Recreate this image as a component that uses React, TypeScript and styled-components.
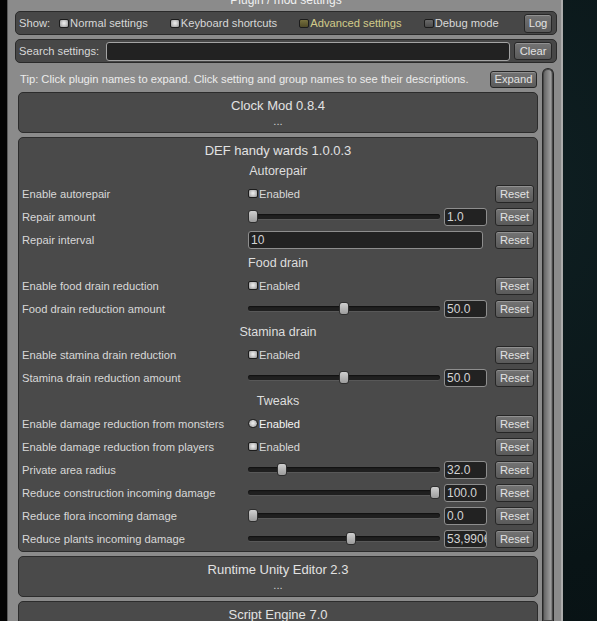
import React from 'react';
import styled, { createGlobalStyle, css } from 'styled-components';

type Tone = 'on' | 'off' | 'adv' | 'hover';

type Setting =
  | { kind: 'toggle'; label: string; hover?: boolean }
  | { kind: 'slider'; label: string; value: string; fraction: number }
  | { kind: 'text'; label: string; value: string };

interface Group {
  name: string;
  settings: Setting[];
}

interface Plugin {
  title: string;
  groups?: Group[];
}

const plugins: Plugin[] = [
  { title: 'Clock Mod 0.8.4' },
  {
    title: 'DEF handy wards 1.0.0.3',
    groups: [
      {
        name: 'Autorepair',
        settings: [
          { kind: 'toggle', label: 'Enable autorepair' },
          { kind: 'slider', label: 'Repair amount', value: '1.0', fraction: 0 },
          { kind: 'text', label: 'Repair interval', value: '10' }
        ]
      },
      {
        name: 'Food drain',
        settings: [
          { kind: 'toggle', label: 'Enable food drain reduction' },
          { kind: 'slider', label: 'Food drain reduction amount', value: '50.0', fraction: 0.5 }
        ]
      },
      {
        name: 'Stamina drain',
        settings: [
          { kind: 'toggle', label: 'Enable stamina drain reduction' },
          { kind: 'slider', label: 'Stamina drain reduction amount', value: '50.0', fraction: 0.5 }
        ]
      },
      {
        name: 'Tweaks',
        settings: [
          { kind: 'toggle', label: 'Enable damage reduction from monsters', hover: true },
          { kind: 'toggle', label: 'Enable damage reduction from players' },
          { kind: 'slider', label: 'Private area radius', value: '32.0', fraction: 0.16 },
          { kind: 'slider', label: 'Reduce construction incoming damage', value: '100.0', fraction: 1 },
          { kind: 'slider', label: 'Reduce flora incoming damage', value: '0.0', fraction: 0 },
          { kind: 'slider', label: 'Reduce plants incoming damage', value: '53,9906', fraction: 0.54 }
        ]
      }
    ]
  },
  { title: 'Runtime Unity Editor 2.3' },
  { title: 'Script Engine 7.0' }
];

const GlobalStyle = createGlobalStyle`
  html, body {
    margin: 0;
    padding: 0;
    background: #0a1618;
  }

  body {
    font-family: "Liberation Sans", Arial, sans-serif;
    font-size: 11.2px;
    color: #d8d8d8;
  }
`;

const Page = styled.div`
  width: 597px;
  height: 621px;
  overflow: hidden;
  display: flex;
  background: radial-gradient(circle at 80% 30%, #0f2023 0%, #091416 60%, #071012 100%);
`;

const LeftEdge = styled.div`
  width: 7px;
  flex: none;
  background: #050505;
`;

const Window = styled.div`
  width: 556px;
  flex: none;
  box-sizing: border-box;
  background: #8b8b8b;
  border-left: 1px solid #5c5c5c;
  border-right: 2px solid #acacac;
  padding: 0 4px 0 7px;
  display: flex;
  flex-direction: column;
`;

const TitleBar = styled.div`
  height: 11px;
  overflow: hidden;
  text-align: center;
`;

const TitleText = styled.div`
  margin-top: -7px;
  line-height: 14px;
  font-size: 12px;
  color: #f0f0f0;
`;

const Bar = styled.div`
  height: 24px;
  box-sizing: border-box;
  margin-bottom: 4px;
  display: flex;
  align-items: center;
  background: #474747;
  border: 1px solid #2a2a2a;
  border-radius: 5px;
  padding: 0 4px 0 3px;
  color: #d8d8d8;
`;

const ShowLabel = styled.span`
  margin-right: 9px;
`;

const ToggleWrap = styled.span<{ $tone: Tone }>`
  display: inline-flex;
  align-items: center;
  white-space: nowrap;
  margin-right: 22px;
  color: ${p => (p.$tone === 'adv' ? '#d2cb8a' : p.$tone === 'hover' ? '#f4f4f4' : '#d8d8d8')};
`;

const Box = styled.span<{ $tone: Tone }>`
  width: 8px;
  height: 7px;
  margin-right: 1px;
  border: 1px solid #1c1c1c;
  border-radius: ${p => (p.$tone === 'hover' ? '5px' : '2px')};
  ${p =>
    p.$tone === 'off'
      ? css`background: linear-gradient(#6a6a6a, #4a4a4a);`
      : p.$tone === 'adv'
        ? css`background: linear-gradient(#77703e, #4f4a27);`
        : css`background: radial-gradient(circle at 50% 45%, #f0f0f0 0%, #cacaca 45%, #8a8a8a 100%);`}
`;

const Button = styled.button<{ $w: number; $h?: number }>`
  width: ${p => p.$w}px;
  height: ${p => p.$h ?? 18}px;
  flex: none;
  padding: 0;
  font: 11.2px "Liberation Sans", Arial, sans-serif;
  color: #e2e2e2;
  background: linear-gradient(#747474, #5a5a5a);
  border: 1px solid #262626;
  border-radius: 3px;
  box-shadow: inset 0 1px 0 rgba(255, 255, 255, 0.22);
`;

const Spacer = styled.span`
  flex: 1;
`;

const SearchInput = styled.div`
  flex: 1;
  height: 19px;
  box-sizing: border-box;
  margin: 0 4px 0 7px;
  background: #222;
  border: 1px solid #a4a4a4;
  border-radius: 3px;
`;

const ScrollArea = styled.div`
  flex: 1;
  display: flex;
  min-height: 0;
`;

const Content = styled.div`
  width: 520px;
  margin-left: 3px;
  flex: none;
`;

const ScrollBar = styled.div`
  width: 12px;
  margin: 1px 0 0 4px;
  box-sizing: border-box;
  border: 1px solid #262626;
  border-bottom: none;
  border-radius: 6px 6px 0 0;
  background: linear-gradient(to right, #5e5e5e, #8a8a8a 55%, #9a9a9a 75%, #575757);
  box-shadow: inset 0 0 0 1px #474747;
`;

const TipRow = styled.div`
  height: 24px;
  margin-bottom: 1px;
  display: flex;
  align-items: center;
  justify-content: space-between;
  padding: 0 1px 0 2px;
  color: #ececec;
`;

const PluginBox = styled.div`
  margin-bottom: 4px;
  background: #4a4a4a;
  border: 1px solid #2c2c2c;
  border-radius: 5px;
  padding: 4px 0 1px;
`;

const PluginTitle = styled.div`
  text-align: center;
  font-size: 13px;
  line-height: 18px;
  color: #e2e2e2;
`;

const Dots = styled.div`
  text-align: center;
  line-height: 13px;
  height: 16px;
  color: #d0d0d0;
`;

const GroupHeader = styled.div`
  height: 22px;
  line-height: 22px;
  text-align: center;
  font-size: 12.5px;
  color: #dedede;

  & + * {
    margin-top: 0;
  }
`;

const GroupBlock = styled.div`
  & + & {
    margin-top: 1px;
  }
`;

const Row = styled.div`
  height: 23px;
  display: flex;
  align-items: center;
  padding: 0 3px;
`;

const Label = styled.div`
  width: 226px;
  flex: none;
  white-space: nowrap;
  color: #d8d8d8;
`;

const Control = styled.div`
  flex: 1;
  display: flex;
  align-items: center;
  margin-right: 8px;
`;

const Track = styled.div`
  position: relative;
  flex: 1;
  height: 5px;
  margin-right: 4px;
  background: #1f1f1f;
  border-radius: 3px;
  box-shadow: inset 0 1px 1px #111, 0 1px 0 rgba(255, 255, 255, 0.08);
`;

const Thumb = styled.div`
  position: absolute;
  top: -4px;
  width: 8px;
  height: 11px;
  background: linear-gradient(#cfcfcf, #9c9c9c);
  border: 1px solid #2e2e2e;
  border-radius: 3px;
`;

const Field = styled.div<{ $w?: number }>`
  ${p => (p.$w ? css`width: ${p.$w}px; flex: none;` : css`flex: 1; margin-right: 4px;`)}
  height: 18px;
  box-sizing: border-box;
  line-height: 16px;
  padding-left: 2px;
  overflow: hidden;
  white-space: nowrap;
  background: #222;
  border: 1px solid #8e8e8e;
  border-radius: 3px;
  color: #d4d4d4;
  font-size: 12px;
`;

const Toggle = ({ tone, children }: { tone: Tone; children: React.ReactNode }) => (
  <ToggleWrap $tone={tone}>
    <Box $tone={tone} />
    {children}
  </ToggleWrap>
);

const SettingRow = ({ setting }: { setting: Setting }) => (
  <Row>
    <Label>{setting.label}</Label>
    <Control>
      {setting.kind === 'toggle' && <Toggle tone={setting.hover ? 'hover' : 'on'}>Enabled</Toggle>}
      {setting.kind === 'slider' && (
        <>
          <Track>
            <Thumb style={{ left: `calc(${setting.fraction} * (100% - 10px))` }} />
          </Track>
          <Field $w={43}>{setting.value}</Field>
        </>
      )}
      {setting.kind === 'text' && <Field>{setting.value}</Field>}
    </Control>
    <Button $w={39}>Reset</Button>
  </Row>
);

const PluginPanel = ({ plugin }: { plugin: Plugin }) => (
  <PluginBox>
    <PluginTitle>{plugin.title}</PluginTitle>
    {plugin.groups ? (
      plugin.groups.map(group => (
        <GroupBlock key={group.name}>
          <GroupHeader>{group.name}</GroupHeader>
          {group.settings.map(s => (
            <SettingRow key={s.label} setting={s} />
          ))}
        </GroupBlock>
      ))
    ) : (
      <Dots>...</Dots>
    )}
  </PluginBox>
);

export default function App() {
  return (
    <>
      <GlobalStyle />
      <Page>
        <LeftEdge />
        <Window>
          <TitleBar>
            <TitleText>Plugin / mod settings</TitleText>
          </TitleBar>
          <Bar>
            <ShowLabel>Show:</ShowLabel>
            <Toggle tone="on">Normal settings</Toggle>
            <Toggle tone="on">Keyboard shortcuts</Toggle>
            <Toggle tone="adv">Advanced settings</Toggle>
            <Toggle tone="off">Debug mode</Toggle>
            <Spacer />
            <Button $w={28} $h={19}>Log</Button>
          </Bar>
          <Bar>
            <span>Search settings:</span>
            <SearchInput />
            <Button $w={38}>Clear</Button>
          </Bar>
          <ScrollArea>
            <Content>
              <TipRow>
                <span>Tip: Click plugin names to expand. Click setting and group names to see their descriptions.</span>
                <Button $w={47} $h={17}>Expand</Button>
              </TipRow>
              {plugins.map(p => (
                <PluginPanel key={p.title} plugin={p} />
              ))}
            </Content>
            <ScrollBar />
          </ScrollArea>
        </Window>
      </Page>
    </>
  );
}
